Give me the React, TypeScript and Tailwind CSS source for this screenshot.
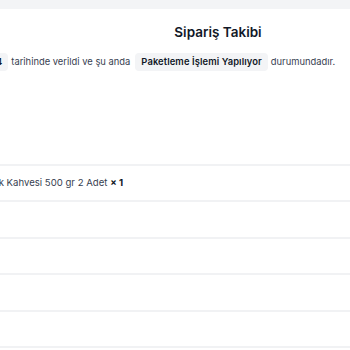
import React from 'react';

const rows = [
  { name: 'Türk Kahvesi 500 gr 2 Adet', qty: 1 },
  null,
  null,
  null,
  null,
];

export default function App() {
  return (
    <div className="w-[350px] h-[350px] overflow-hidden bg-white font-['Inter','Liberation_Sans',sans-serif] text-[#374151]">
      <div className="h-[9px] bg-[#f3f4f6]" />
      <div className="ml-[-200px] w-[836px]">
        <h1 className="mt-[14px] text-center text-[13.5px] leading-[18px] font-semibold text-[#111827]">Sipariş Takibi</h1>
        <p className="mt-[12px] ml-[145px] flex items-center whitespace-nowrap text-[9.4px] leading-[18px] text-[#374151]">
          <span className="rounded bg-[#f3f4f6] px-[6px] font-semibold text-[#111827]">15.03.2024</span>
          <span className="ml-[3px]">tarihinde verildi ve şu anda</span>
          <span className="ml-[5px] rounded bg-[#f3f4f6] px-[6px] font-semibold tracking-[0.1px] text-[#111827]">Paketleme İşlemi Yapılıyor</span>
          <span className="ml-[3px]">durumundadır.</span>
        </p>
        <div className="mt-[93px]">
          {rows.map((r, i) => (
            <div key={i} className="h-[36.4px] border-t-2 border-[#f1f2f4] flex items-center pl-[183.5px] text-[9.6px]">
              {r && (
                <span>
                  {r.name} <b className="font-bold text-[#111827]">× {r.qty}</b>
                </span>
              )}
            </div>
          ))}
          <div className="border-t-2 border-[#f1f2f4]" />
        </div>
      </div>
    </div>
  );
}
